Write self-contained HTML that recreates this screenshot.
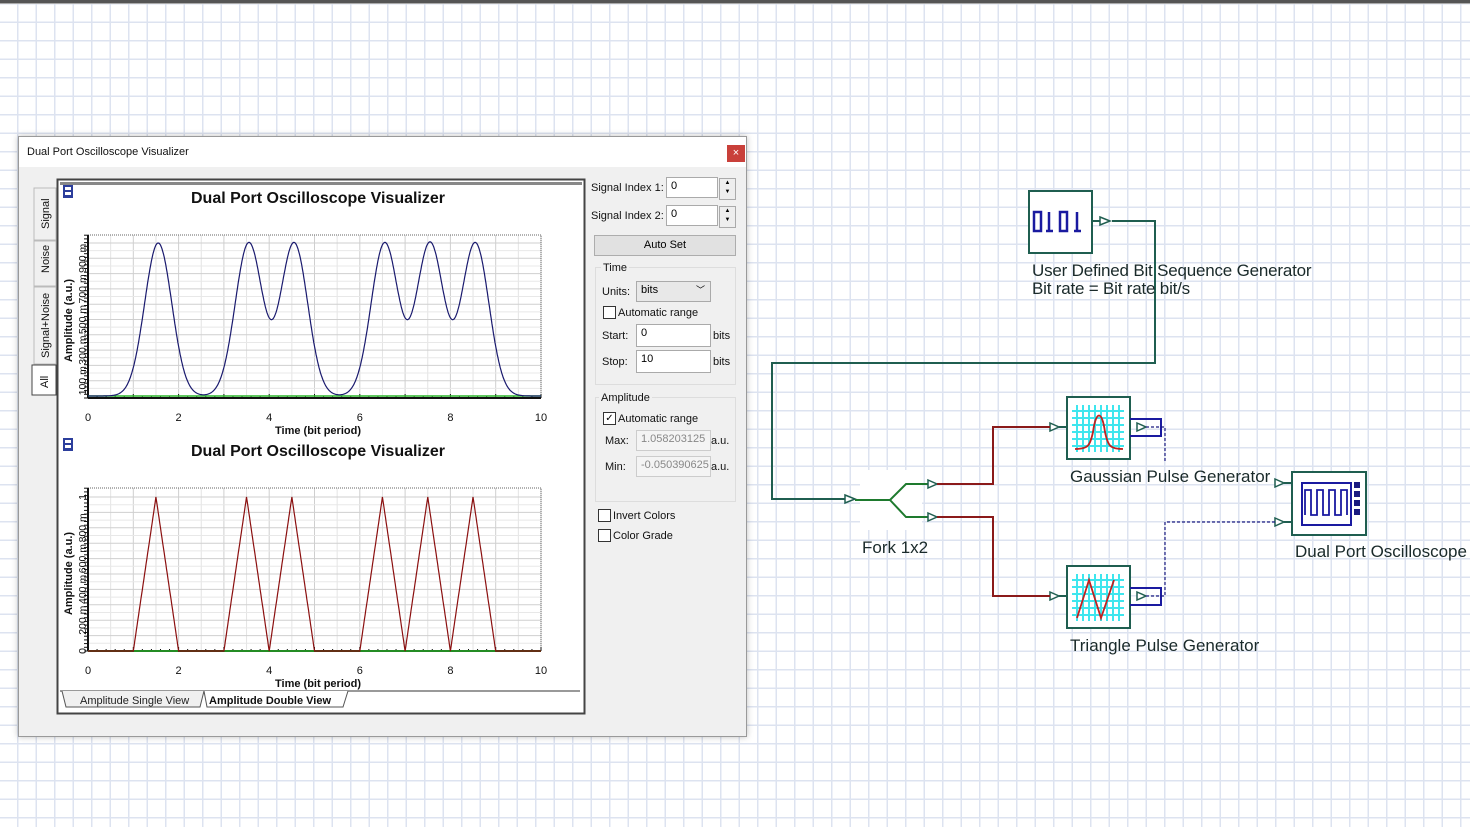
<!DOCTYPE html>
<html><head><meta charset="utf-8"><style>
body{margin:0;width:1470px;height:827px;overflow:hidden;position:relative;font-family:"Liberation Sans",sans-serif;
background-color:#fff;
background-image:linear-gradient(to right,#dde3f0 1.5px,transparent 1.5px),linear-gradient(to bottom,#dde3f0 1.5px,transparent 1.5px);
background-size:18.5px 18.5px;background-position:17px 3px;}
.top{position:absolute;left:0;top:0;width:1470px;height:3px;background:#555;border-bottom:1px solid #aaa}
.dlg{position:absolute;left:18px;top:136px;width:727px;height:599px;background:#f0f0f0;border:1px solid #9a9a9a;box-shadow:0 0 6px rgba(0,0,0,.25)}
.tbar{position:absolute;left:0;top:0;width:727px;height:30px;background:#fff}
.tbar span{position:absolute;left:8px;top:9px;font-size:11px;color:#111}
.close{position:absolute;left:708px;top:8px;width:18px;height:17px;background:#c9403a;color:#fff;font-size:11px;text-align:center;line-height:17px}
.pan{position:absolute;font-size:11px;color:#111}
.inp{position:absolute;background:#fff;border:1px solid #aaa;font-size:11px;padding:2px 4px;box-sizing:border-box}
.cb{position:absolute;width:11px;height:11px;border:1px solid #333;background:#fff}
.lbl{position:absolute;font-size:17px;color:#1a2a2a;letter-spacing:0;white-space:nowrap}
</style></head><body>
<div class="top"></div>
<div class="dlg">
<div class="tbar"><span>Dual Port Oscilloscope Visualizer</span><div class="close">×</div></div>
</div>
<svg style="position:absolute;left:0;top:0" width="1470" height="827">
<rect x="57.5" y="179.5" width="527" height="534" fill="#fff" stroke="#444" stroke-width="2"/>
<rect x="60" y="182" width="522" height="3" fill="#888"/>
<g font-size="11" fill="#111">
<rect x="34" y="188" width="22" height="52" fill="#f0f0f0" stroke="#bbb"/>
<rect x="34" y="241" width="22" height="45" fill="#f0f0f0" stroke="#bbb"/>
<rect x="34" y="287" width="22" height="77" fill="#f0f0f0" stroke="#bbb"/>
<rect x="32" y="365" width="24" height="30" fill="#fff" stroke="#444"/>
<text transform="translate(49,229) rotate(-90)">Signal</text>
<text transform="translate(49,273) rotate(-90)">Noise</text>
<text transform="translate(49,358) rotate(-90)">Signal+Noise</text>
<text transform="translate(48,388) rotate(-90)">All</text>
</g>
<g id="plots"></g>
<line x1="60" y1="691" x2="580" y2="691" stroke="#333"/>
<path d="M62 691 L66 707 L200 707 L204 691" fill="#f0f0f0" stroke="#555"/>
<path d="M204 691 L207 707 L343 707 L348 691" fill="#fff" stroke="#555"/>
<text x="80" y="704" font-size="11" fill="#222">Amplitude Single View</text>
<text x="209" y="704" font-size="11" font-weight="bold" fill="#111">Amplitude Double View</text>
</svg>
<div class="pan" style="left:591px;top:182px">Signal Index 1:</div>
<div class="inp" style="left:666px;top:177px;width:52px;height:21px">0</div>
<div style="position:absolute;left:719px;top:178px;width:15px;height:20px;border:1px solid #aaa;background:#eee;font-size:6px;text-align:center;line-height:9px">▲<br>▼</div>
<div class="pan" style="left:591px;top:210px">Signal Index 2:</div>
<div class="inp" style="left:666px;top:205px;width:52px;height:21px">0</div>
<div style="position:absolute;left:719px;top:206px;width:15px;height:20px;border:1px solid #aaa;background:#eee;font-size:6px;text-align:center;line-height:9px">▲<br>▼</div>
<div style="position:absolute;left:594px;top:235px;width:140px;height:19px;background:#e1e1e1;border:1px solid #adadad;font-size:11px;text-align:center;line-height:19px">Auto Set</div>
<div style="position:absolute;left:595px;top:267px;width:139px;height:116px;border:1px solid #ddd"></div>
<div class="pan" style="left:601px;top:262px;background:#f0f0f0;padding:0 2px">Time</div>
<div class="pan" style="left:602px;top:286px">Units:</div>
<div class="inp" style="left:636px;top:281px;width:75px;height:21px;background:#e8e8e8">bits<span style="position:absolute;right:5px;top:1px;font-size:9px">﹀</span></div>
<div class="cb" style="left:603px;top:306px"></div><div class="pan" style="left:618px;top:307px">Automatic range</div>
<div class="pan" style="left:602px;top:330px">Start:</div>
<div class="inp" style="left:636px;top:324px;width:75px;height:23px">0</div><div class="pan" style="left:713px;top:330px">bits</div>
<div class="pan" style="left:602px;top:356px">Stop:</div>
<div class="inp" style="left:636px;top:350px;width:75px;height:23px">10</div><div class="pan" style="left:713px;top:356px">bits</div>
<div style="position:absolute;left:595px;top:397px;width:139px;height:103px;border:1px solid #ddd"></div>
<div class="pan" style="left:599px;top:392px;background:#f0f0f0;padding:0 2px">Amplitude</div>
<div class="cb" style="left:603px;top:412px;font-size:10px;line-height:11px;text-align:center">✓</div><div class="pan" style="left:618px;top:413px">Automatic range</div>
<div class="pan" style="left:605px;top:435px">Max:</div>
<div class="inp" style="left:636px;top:430px;width:75px;height:21px;color:#888;border-color:#ccc;background:#f4f4f4">1.058203125</div><div class="pan" style="left:711px;top:435px">a.u.</div>
<div class="pan" style="left:605px;top:461px">Min:</div>
<div class="inp" style="left:636px;top:456px;width:75px;height:21px;color:#888;border-color:#ccc;background:#f4f4f4;overflow:hidden;white-space:nowrap">-0.050390625</div><div class="pan" style="left:711px;top:461px">a.u.</div>
<div class="cb" style="left:598px;top:509px"></div><div class="pan" style="left:613px;top:510px">Invert Colors</div>
<div class="cb" style="left:598px;top:529px"></div><div class="pan" style="left:613px;top:530px">Color Grade</div>

<svg style="position:absolute;left:0;top:0" width="1470" height="827">
<g fill="none" stroke="#1f5e50" stroke-width="2">
<rect x="1029" y="191" width="63" height="62" fill="#fff"/>
<path d="M1092 221 H1100 M1112 221 H1155 V363 H772 V499 H845"/>
</g>
<g fill="#fff" stroke="#1f5e50" stroke-width="1.5">
<path d="M1100 217 L1110 221 L1100 225Z"/>
<path d="M845 495 L855 499 L845 503Z"/>
</g>
<g fill="none" stroke="#1a1aa0" stroke-width="2.5">
<rect x="1034" y="212" width="7" height="19"/><path d="M1049 212 V231 M1046 231 H1053"/>
<rect x="1060" y="212" width="7" height="19"/><path d="M1077 212 V231 M1074 231 H1081"/>
</g>
<rect x="860" y="470" width="62" height="60" fill="#fff"/>
<g fill="none" stroke="#1e7a2e" stroke-width="2">
<path d="M855 500 H890 L906 484 H928 M890 500 L906 517 H928"/>
</g>
<g fill="#fff" stroke="#1f5e50" stroke-width="1.5">
<path d="M928 480 L937 484 L928 488Z"/><path d="M928 513 L937 517 L928 521Z"/>
<path d="M1050 423 L1059 427 L1050 431Z"/><path d="M1050 592 L1059 596 L1050 600Z"/>
<path d="M1275 479 L1284 483 L1275 487Z"/><path d="M1275 518 L1284 522 L1275 526Z"/>
<path d="M1137 423 L1146 427 L1137 431Z"/><path d="M1137 592 L1146 596 L1137 600Z"/>
</g>
<g fill="none" stroke="#8b1a1a" stroke-width="2">
<path d="M937 484 H993 V427 H1050 M937 517 H993 V596 H1050"/>
</g>
<g fill="none" stroke="#1f5e50" stroke-width="2">
<path d="M1059 427 H1067 M1059 596 H1067 M1284 483 H1292 M1284 522 H1292"/>
<rect x="1067" y="397" width="63" height="62" fill="#fff"/>
<rect x="1067" y="566" width="63" height="62" fill="#fff"/>
<rect x="1292" y="472" width="74" height="63" fill="#fff"/>
</g>
<g stroke="#1a1aa0" stroke-width="2" fill="none">
<path d="M1130 419 H1161 V436 H1130"/><path d="M1130 588 H1161 V605 H1130"/>
<rect x="1302" y="483" width="49" height="42"/>
<path d="M1305 515 V490 H1311 V515 H1317 V490 H1323 V515 H1329 V490 H1335 V515 H1341 V490 H1347 V515" stroke-width="1.8"/>
</g>
<g fill="#1a1a80"><rect x="1354" y="482" width="6" height="6"/><rect x="1354" y="491" width="6" height="6"/><rect x="1354" y="500" width="6" height="6"/><rect x="1354" y="509" width="6" height="6"/></g>
<g stroke="#1a1a80" stroke-width="1.2" stroke-dasharray="3,2" fill="none">
<path d="M1146 427 H1165 V462 M1146 596 H1165 V522 H1275"/>
</g>
<g stroke="#3ee6ee" stroke-width="2">
<path d="M1077 405 V452 M1083 405 V452 M1089 405 V452 M1095 405 V452 M1101 405 V452 M1107 405 V452 M1113 405 V452 M1119 405 V452 M1072 411 H1124 M1072 418 H1124 M1072 425 H1124 M1072 432 H1124 M1072 439 H1124 M1072 446 H1124"/>
<path d="M1077 574 V621 M1083 574 V621 M1089 574 V621 M1095 574 V621 M1101 574 V621 M1107 574 V621 M1113 574 V621 M1119 574 V621 M1072 580 H1124 M1072 587 H1124 M1072 594 H1124 M1072 601 H1124 M1072 608 H1124 M1072 615 H1124"/>
</g>
<path d="M1075 449 C1088 449 1090 446 1093 432 C1096 410 1102 410 1105 432 C1108 446 1110 449 1123 449" stroke="#c02020" stroke-width="1.8" fill="none"/>
<path d="M1077 618 L1089 580 L1101 618 L1114 580" stroke="#c02020" stroke-width="1.8" fill="none"/>
</svg>
<div class="lbl" style="left:1032px;top:261px;letter-spacing:-0.2px">User Defined Bit Sequence Generator</div>
<div class="lbl" style="left:1032px;top:279px;letter-spacing:-0.2px">Bit rate = Bit rate  bit/s</div>
<div class="lbl" style="left:862px;top:538px">Fork 1x2</div>
<div class="lbl" style="left:1070px;top:467px">Gaussian Pulse Generator</div>
<div class="lbl" style="left:1070px;top:636px">Triangle Pulse Generator</div>
<div class="lbl" style="left:1295px;top:542px">Dual Port Oscilloscope</div>
<script>
(function(){
var g=document.getElementById('plots'),s='';
var bits=[0,1,0,1,1,0,1,1,1,0];
function plot(top,y0,y1,col,fn,labs){
 var x0=88,x1=541,pb=(x1-x0)/10,bot=top+163;
 s+='<rect x="63" y="'+(top-50)+'" width="10" height="13" fill="#2c3e9c"/><rect x="65" y="'+(top-48)+'" width="6" height="3" fill="#fff"/><rect x="65" y="'+(top-43)+'" width="6" height="3" fill="#fff"/>';
 s+='<text x="318" y="'+(top-32)+'" font-size="16" font-weight="bold" text-anchor="middle" fill="#111">Dual Port Oscilloscope Visualizer</text>';
 for(var i=0;i<=20;i++){var x=x0+i*pb/2;s+='<line x1="'+x+'" y1="'+top+'" x2="'+x+'" y2="'+bot+'" stroke="'+(i%2?'#e4e4e4':'#cfcfcf')+'"/>';}
 for(var v=0;v<=1.0001;v+=0.05){var y=y0+(y1-y0)*v;if(y<top)continue;s+='<line x1="'+x0+'" y1="'+y+'" x2="'+x1+'" y2="'+y+'" stroke="'+(Math.round(v*20)%2?'#e8e8e8':'#cfcfcf')+'"/>';}
 s+='<rect x="'+x0+'" y="'+top+'" width="'+(x1-x0)+'" height="'+(bot-top)+'" fill="none" stroke="#666" stroke-dasharray="1,1"/>';
 s+='<line x1="'+x0+'" y1="'+top+'" x2="'+x0+'" y2="'+bot+'" stroke="#111" stroke-width="2"/>';
 s+='<line x1="'+x0+'" y1="'+bot+'" x2="'+x1+'" y2="'+bot+'" stroke="#111" stroke-width="2"/>';
 for(var i=0;i<=50;i++){var x=x0+i*pb/5;s+='<line x1="'+x+'" y1="'+bot+'" x2="'+x+'" y2="'+(bot-(i%5?2:4))+'" stroke="#111"/>';}
 for(var y=bot;y>top;y-=3.7){s+='<line x1="'+(x0-4)+'" y1="'+y+'" x2="'+x0+'" y2="'+y+'" stroke="#111"/>';}
 for(var i=0;i<=5;i++){s+='<text x="'+(x0+i*2*pb)+'" y="'+(bot+23)+'" font-size="11" text-anchor="middle" fill="#111">'+(i*2)+'</text>';}
 s+='<text x="318" y="'+(bot+36)+'" font-size="11" font-weight="bold" text-anchor="middle" fill="#111">Time (bit period)</text>';
 s+='<text transform="translate(72,'+((top+bot)/2+4)+') rotate(-90)" font-size="11" font-weight="bold" text-anchor="middle" fill="#111">Amplitude (a.u.)</text>';
 for(var j=0;j<labs.length;j++){var y=y0+(y1-y0)*labs[j][0];s+='<text transform="translate(86,'+y+') rotate(-90)" font-size="10.5" text-anchor="middle" fill="#111">'+labs[j][1]+'</text>';}
 s+='<line x1="'+x0+'" y1="'+y0+'" x2="'+x1+'" y2="'+y0+'" stroke="#2ab52a" stroke-width="1.5"/>';
 var d='';for(var i=0;i<=600;i++){var t=i/60;var y=y0+(y1-y0)*fn(t);d+=(i?'L':'M')+(x0+t*pb).toFixed(1)+' '+y.toFixed(1);}
 s+='<path d="'+d+'" fill="none" stroke="'+col+'" stroke-width="1.2"/>';
}
plot(235,396,243,'#1a1a6e',function(t){var v=0;for(var k=0;k<10;k++)if(bits[k]){var d=t-k-0.55;v+=Math.exp(-d*d/(2*0.09));}return v;},[[0.1,'100 m'],[0.3,'300 m'],[0.5,'500 m'],[0.7,'700 m'],[0.9,'900 m']]);
plot(488,651,497,'#8b1010',function(t){var k=Math.floor(t);if(k>9)k=9;if(!bits[k])return 0;var f=t-k;return 1-Math.abs(f-0.5)*2;},[[0,'0'],[0.2,'200 m'],[0.4,'400 m'],[0.6,'600 m'],[0.8,'800 m'],[1,'1']]);
g.innerHTML=s;
})();
</script>
</body></html>
